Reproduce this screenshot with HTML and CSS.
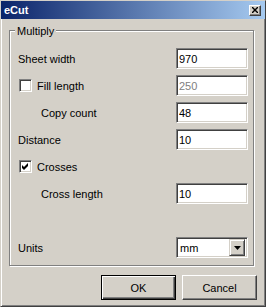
FILE: index.html
```html
<!DOCTYPE html>
<html lang="en">
<head>
    <meta charset="UTF-8">
    <title>eCut</title>
    <link rel="stylesheet" href="styles.css">
</head>
<body>
    <div class="window">
        <div class="titlebar">
            <span class="title">eCut</span>
            <span class="close">
                <svg width="6" height="6" viewBox="0 0 6 6"><path d="M0 0 L6 6 M6 0 L0 6" stroke="#000" stroke-width="1.4"/></svg>
            </span>
        </div>

        <div class="content">
            <div class="group">
                <span class="legend">Multiply</span>

                <div class="row">
                    <span class="label">Sheet width</span>
                    <input class="field" type="text" value="970">
                </div>
                <div class="row">
                    <span class="check"></span>
                    <span class="label">Fill length</span>
                    <input class="field dim" type="text" value="250">
                </div>
                <div class="row">
                    <span class="label indent">Copy count</span>
                    <input class="field" type="text" value="48">
                </div>
                <div class="row">
                    <span class="label">Distance</span>
                    <input class="field" type="text" value="10">
                </div>
                <div class="row">
                    <span class="check">
                        <svg width="7" height="7" viewBox="0 0 7 7"><path d="M0 2 L2 4 L6 0 L6 3 L2 7 L0 5 Z" fill="#000"/></svg>
                    </span>
                    <span class="label">Crosses</span>
                </div>
                <div class="row">
                    <span class="label indent">Cross length</span>
                    <input class="field" type="text" value="10">
                </div>

                <div class="row units">
                    <span class="label">Units</span>
                    <div class="select">
                        <span class="value">mm</span>
                        <span class="drop">
                            <svg width="7" height="4" viewBox="0 0 7 4"><path d="M0 0 H7 L3.5 4 Z" fill="#000"/></svg>
                        </span>
                    </div>
                </div>
            </div>

            <div class="buttons">
                <button class="btn default">OK</button>
                <button class="btn">Cancel</button>
            </div>
        </div>
    </div>
</body>
</html>
```

FILE: styles.css
```css
body {
    margin: 0;
    background-color: #d4d0c8;
    font-family: "Liberation Sans", Arial, sans-serif;
    font-size: 11px;
    color: #000;
}
.window {
    width: 266px;
    height: 307px;
    box-sizing: border-box;
    display: flex;
    flex-direction: column;
    background-color: #d4d0c8;
    border: 1px solid;
    border-color: #d4d0c8 #404040 #404040 #d4d0c8;
    box-shadow: inset 1px 1px 0 #fff, inset -1px -1px 0 #808080;
}
.titlebar {
    height: 18px;
    display: flex;
    align-items: center;
    justify-content: space-between;
    padding: 0 4px 0 3px;
    background: linear-gradient(to right, #0a246a, #a6caf0);
}
.title {
    color: #fff;
    font-weight: bold;
    font-size: 11px;
}
.close {
    width: 12px;
    height: 11px;
    box-sizing: border-box;
    display: flex;
    align-items: center;
    justify-content: center;
    background-color: #d4d0c8;
    border: 1px solid;
    border-color: #fff #404040 #404040 #fff;
    box-shadow: inset -1px -1px 0 #808080;
}
.content {
    flex: 1;
    display: flex;
    flex-direction: column;
    padding: 11px 8px 6px 8px;
}
.group {
    position: relative;
    height: 236px;
    box-sizing: border-box;
    margin-right: 3px;
    display: flex;
    flex-direction: column;
    gap: 6px;
    padding: 17px 5px 7px 8px;
    border: 1px solid #808080;
    box-shadow: 1px 1px 0 #fff, inset 1px 1px 0 #fff;
}
.legend {
    position: absolute;
    left: 5px;
    top: -6px;
    padding: 0 2px;
    line-height: 13px;
    background-color: #d4d0c8;
}
.row {
    height: 21px;
    display: flex;
    align-items: center;
}
.row.units {
    margin-top: auto;
}
.label {
    flex: 1;
}
.label.indent {
    padding-left: 23px;
}
.check {
    width: 13px;
    height: 13px;
    box-sizing: border-box;
    margin: 0 5px 0 1px;
    display: flex;
    align-items: center;
    justify-content: center;
    background-color: #fff;
    border: 1px solid;
    border-color: #808080 #fff #fff #808080;
    box-shadow: inset 1px 1px 0 #404040, inset -1px -1px 0 #d4d0c8;
}
.field, .select {
    width: 72px;
    height: 21px;
    box-sizing: border-box;
    margin: 0;
    padding: 0 2px;
    font-family: inherit;
    font-size: 11px;
    color: #000;
    background-color: #fff;
    border: 1px solid;
    border-color: #808080 #fff #fff #808080;
    box-shadow: inset 1px 1px 0 #404040, inset -1px -1px 0 #d4d0c8;
    outline: none;
}
.field.dim {
    color: #808080;
}
.select {
    display: flex;
    align-items: center;
    padding: 1px 2px 1px 1px;
}
.select .value {
    flex: 1;
    padding-left: 2px;
}
.drop {
    width: 16px;
    height: 17px;
    box-sizing: border-box;
    display: flex;
    align-items: center;
    justify-content: center;
    background-color: #d4d0c8;
    border: 1px solid;
    border-color: #d4d0c8 #404040 #404040 #d4d0c8;
    box-shadow: inset 1px 1px 0 #fff, inset -1px -1px 0 #808080;
}
.buttons {
    display: flex;
    justify-content: flex-end;
    gap: 6px;
    margin-top: 9px;
}
.btn {
    width: 75px;
    height: 25px;
    box-sizing: border-box;
    padding: 0;
    font-family: inherit;
    font-size: 11px;
    color: #000;
    background-color: #d4d0c8;
    border: 1px solid;
    border-color: #fff #404040 #404040 #fff;
    box-shadow: inset -1px -1px 0 #808080;
}
.btn.default {
    border-color: #000;
    box-shadow: inset 1px 1px 0 #fff, inset -1px -1px 0 #404040, inset -2px -2px 0 #808080;
}
```
